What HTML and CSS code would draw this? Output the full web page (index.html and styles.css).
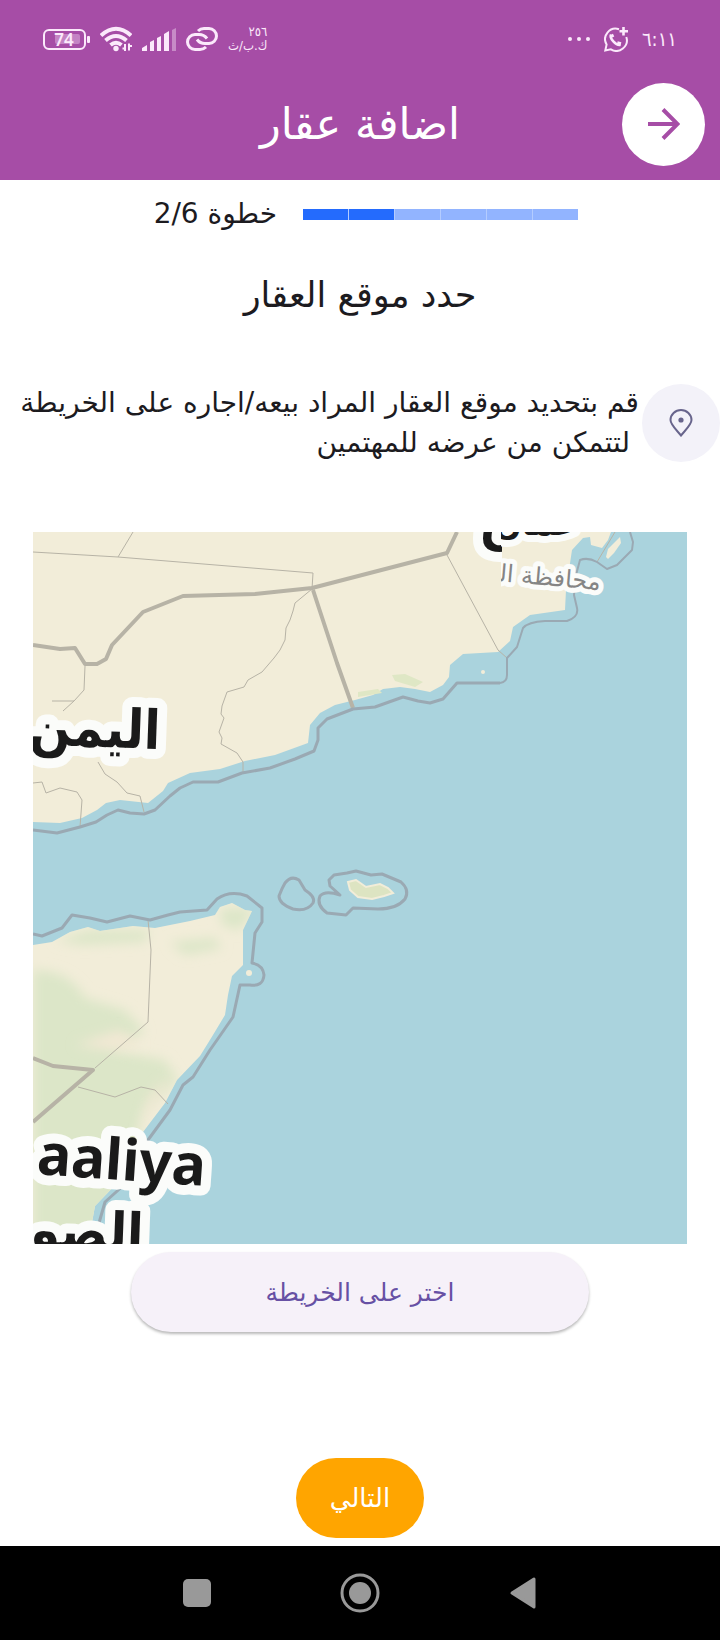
FILE: index.html
```html
<!DOCTYPE html>
<html lang="ar" dir="rtl">
<head>
<meta charset="utf-8">
<meta name="viewport" content="width=device-width, initial-scale=1">
<title>اضافة عقار</title>
<link rel="stylesheet" href="styles.css">
</head>
<body>
<header class="top">
  <div class="status">
    <div class="status-group">
      <span class="clock">٦:١١</span>
      <svg class="chat" viewBox="0 0 24 25" width="24" height="25" fill="none" stroke="currentColor" stroke-width="2">
        <path d="M15 2.2A10.5 10.5 0 0 0 2.6 17.5L1.3 23.5l5.6-1.2A10.5 10.5 0 0 0 22.3 10"/>
        <path d="M19.5 0v8.5M15.5 4.3H24" stroke-width="2.6"/>
        <path d="M7 7.5c-2 3.5 5 11.500 9.500 10.300" stroke-width="2.500"/>
        <path d="M7.500 7.500l1.300 2.700M13.300 15.800l3.700.9" stroke-width="3.200"/>
      </svg>
      <svg class="dots" viewBox="0 0 22 4" width="22" height="4" fill="currentColor"><circle cx="2" cy="2" r="2"/><circle cx="11" cy="2" r="2"/><circle cx="20" cy="2" r="2"/></svg>
    </div>
    <div class="status-group status-end">
      <span class="speed"><span>٢٥٦</span><span>ك.ب/ث</span></span>
      <svg viewBox="0 0 32 24" width="32" height="24" fill="none" stroke="currentColor" stroke-width="3">
        <path d="M12 4Q14.500 1.500 18 1.500h5a7.300 7.300 0 0 1 0 15h-4q-5 0-8-4"/>
        <path d="M20 20q-2.500 2.500-6 2.500H9a7.300 7.300 0 0 1 0-15h4q5 0 8 4"/>
      </svg>
      <svg viewBox="0 0 34 23" width="34" height="23" fill="currentColor">
        <path d="M0 20l5-3v6H0ZM8 14l4-2v11H8ZM15 10l4-2v15h-4ZM22 6l5-3v20h-5Z"/><path d="M30 2l4-2v23h-4Z" opacity=".4"/>
      </svg>
      <svg viewBox="0 0 32 26" width="32" height="26" fill="none" stroke="currentColor" stroke-width="4">
        <path d="M1 9.500Q16-4 31 9.500M5.500 14.500q10.500-9 21 0M10.500 19q5.500-4.500 11 0"/>
        <circle cx="16" cy="22.500" r="2.700" fill="currentColor" stroke="none"/>
        <path d="M25 18v7M29 17.500v7M22.500 22.500h2.500M29 20h3" stroke-width="2"/>
      </svg>
      <svg class="battery" viewBox="0 0 47 21" width="47" height="21">
        <rect x="1" y="1" width="41" height="19" rx="5" fill="none" stroke="currentColor" stroke-width="2"/>
        <rect x="12" y="5" width="25" height="10" rx="2" fill="currentColor" opacity=".35"/>
        <text x="21" y="17" text-anchor="middle" direction="ltr">74</text>
        <rect x="44" y="7" width="3" height="7" rx="1" fill="currentColor"/>
      </svg>
    </div>
  </div>
  <div class="appbar">
    <button class="back" type="button" aria-label="رجوع">
      <svg viewBox="0 0 32 32" width="32" height="32" fill="none" stroke="currentColor" stroke-width="4"><path d="M0 16h29M15 1.500L29.500 16 15 30.500"/></svg>
    </button>
    <h1 class="title">اضافة عقار</h1>
  </div>
</header>

<main class="content">
  <div class="step">
    <div class="bar" role="progressbar" aria-label="خطوة" aria-valuemin="0" aria-valuemax="6" aria-valuenow="2">
      <i></i><i></i><i></i><i></i><i class="done"></i><i class="done"></i>
    </div>
    <span class="step-label">خطوة 2/6</span>
  </div>
  <h2 class="heading">حدد موقع العقار</h2>
  <div class="hint">
    <span class="pin">
      <svg viewBox="0 0 24 28" width="24" height="28" fill="none" stroke="currentColor" stroke-width="2"><path d="M12 26.500C7 20.500 1.500 15.500 1.500 11a10.500 10 0 0 1 21 0c0 4.500-5.500 9.500-10.500 15.500Z"/><circle cx="12" cy="11" r="2.600" fill="currentColor" stroke="none"/></svg>
    </span>
    <p class="hint-text">قم بتحديد موقع العقار المراد بيعه/اجاره على الخريطة<br>&nbsp;لتتمكن من عرضه للمهتمين</p>
  </div>

  <svg class="map" viewBox="33 532 654 712" role="img" aria-label="الخريطة">
    <defs>
      <clipPath id="tile"><rect x="501" y="532" width="186" height="200"/></clipPath>
      <clipPath id="tile-left"><rect x="33" y="532" width="469" height="712"/></clipPath>
      <clipPath id="somalia"><path d="M33 945L52 942 70 932 88 927 100 931 133 926 155 928 190 921 215 915 220 907 232 903 245 910 252 911 243 930 243 965 232 976 228 995 225 1015 213 1035 200 1056 177 1080 165 1103 143 1132 120 1180 95 1206 88 1244H33Z"/></clipPath>
      <filter id="soft" x="-20%" y="-20%" width="140%" height="140%"><feGaussianBlur stdDeviation="6"/></filter>
    </defs>
    <rect class="sea" x="33" y="532" width="654" height="712"/>
    <path class="land" d="M33 532V822L60 823 82 818 97 810 106 803 120 800 148 803 163 791 168 783 190 773 220 769 245 761 275 755 308 743 310 725 320 713 335 705 355 700 373 695 383 689 400 687 415 689 430 692 443 685 449 677 450 665 463 654 498 652 510 641 513 627 530 615 565 610 566 590 572 550 583 538 590 537 591 545 602 548 608 540 611 532Z"/>
    <path class="land" d="M606 557L608 549 616 541 620 537 621 543 614 553 608 559Z"/>
    <g clip-path="url(#somalia)">
      <rect class="land" x="33" y="880" width="240" height="364"/>
      <g class="green" filter="url(#soft)">
        <path d="M33 970Q70 970 85 998L125 1010 145 1032 110 1050 165 1060 178 1080 145 1110 120 1190 90 1244H33Z"/>
        <path d="M55 940L90 930 150 930 145 942 80 945ZM220 908L255 908 240 930 222 925ZM170 942L215 938 222 948 185 955Z"/>
      </g>
      <path class="sand" filter="url(#soft)" d="M75 1045L120 1030 140 1045 110 1050ZM172 1075L140 1130 150 1095Z"/>
    </g>
    <path class="shrub" d="M392 675L405 674 423 682 415 687 395 681ZM358 692L378 689 382 693 358 697Z"/>
    <path class="islet" d="M348 882L356 880 366 887 380 884 388 888 393 893 384 896 372 899 358 897 350 890Z"/>
    <circle class="land" cx="249" cy="973" r="3"/>
    <circle class="islet" cx="483" cy="672" r="1"/>
    <g class="border thin">
      <path d="M33 552L118 557 313 573 312 589M118 557L133 532M312 589L295 603 293 611 290 620 286 628 285 640 280 650 274 658 262 672 248 680 244 687 227 692 222 706 221 714 224 718 219 732 222 738 221 744 237 753 243 762 243 772M85 666L84 690 74 701 52 701M74 701L63 711M98 762L105 774 117 782 127 793 140 796 144 812M33 783L42 782 46 793 60 788 77 792 82 800 80 827M447 555L498 650 507 658"/>
      <path d="M148 920L151 950 148 1022 95 1068M78 1087L115 1097 141 1087 155 1090 168 1104M597 562L615 532"/>
    </g>
    <g class="border thick">
      <path d="M33 645L60 649 75 648 85 664 97 664 106 659 112 645 143 612 183 596 255 594 312 588 447 553 457 532M313 590L337 663 353 708"/>
      <path d="M33 1058L53 1066 93 1070 33 1122"/>
    </g>
    <g class="waterline">
      <path class="bold" d="M33 830L57 833 80 827 96 822 107 815 118 810 130 813 144 814 155 810 170 796 180 788 193 782 218 782 242 773 270 768 295 759 314 751 318 740 318 728 327 719 353 709 375 707 403 697 418 701 430 703 443 699 457 683 500 683"/>
      <path d="M500 683Q507 682 507 675V658L517 647 523 628Q528 622 545 621L567 621Q579 617 577 608L574 595 576 575 580 560Q588 557 597 562L607 569 617 565 632 550 633 542 630 532"/>
      <path class="bold" d="M33 934L42 936 62 928 72 915 90 918 107 922 130 916 150 920 168 915 180 912 207 910 217 899Q230 890 247 896L262 908V922L255 933 252 963Q263 965 264 975 263 987 250 985H240L233 1017 217 1040 210 1050 193 1077 183 1085 170 1110 148 1140 135 1175 105 1202 93 1244"/>
      <path class="bold" d="M285 883Q291 875 299 880L305 890Q316 897 313 903 307 912 293 909 279 904 279 896 282 888 285 883Z"/>
      <path class="bold" d="M334 875L347 873 356 871 371 875 382 874 401 882Q410 890 405 899 397 909 378 909L353 908 346 915 327 913Q316 905 320 896 325 890 340 895L330 886 329 880Z"/>
    </g>
    <g class="labels">
      <text class="country" x="160" y="749" transform="rotate(2 160 749)">اليمن</text>
      <g clip-path="url(#tile-left)"><text class="country" x="480" y="543" direction="ltr">ن</text></g>
      <g clip-path="url(#tile)">
        <text class="gulf" x="577" y="535">عمان</text>
        <text class="region" x="600" y="590" transform="rotate(5 600 590)">محافظة الوسطى</text>
      </g>
      <text class="country latin" x="36" y="1174" transform="rotate(4 36 1174)" direction="ltr">aaliya</text>
      <text class="country" x="143" y="1252" transform="rotate(2 143 1252)">الصومال</text>
    </g>
  </svg>

  <button class="pick" type="button">اختر على الخريطة</button>
  <button class="next" type="button">التالي</button>
</main>

<nav class="system">
  <button type="button" aria-label="رجوع للخلف"><svg viewBox="0 0 28 34" width="28" height="34"><path d="M3 17L25 3v28Z" fill="currentColor" stroke="currentColor" stroke-width="3" stroke-linejoin="round"/></svg></button>
  <button type="button" aria-label="الرئيسية"><svg viewBox="0 0 40 40" width="40" height="40"><circle cx="20" cy="20" r="18" fill="none" stroke="currentColor" stroke-width="3"/><circle cx="20" cy="20" r="11" fill="currentColor"/></svg></button>
  <button type="button" aria-label="التطبيقات"><svg viewBox="0 0 28 28" width="28" height="28"><rect width="28" height="28" rx="5" fill="currentColor"/></svg></button>
</nav>
</body>
</html>
```

FILE: styles.css
```css
* { box-sizing: border-box; }

body {
  margin: 0;
  min-height: 100vh;
  display: flex;
  flex-direction: column;
  background: #fff;
  color: #1c1b1f;
  font-family: "DejaVu Sans", sans-serif;
}

button {
  border: 0;
  padding: 0;
  font-family: inherit;
  cursor: pointer;
}

svg { display: block; flex: none; }

.top { background: #a64da6; color: #fff; }

.status {
  height: 78px;
  padding: 0 43px;
  display: flex;
  justify-content: space-between;
  align-items: center;
  color: #fbe9fb;
  font-family: "DejaVu Sans Condensed", "DejaVu Sans", sans-serif;
}

.status-group { display: flex; align-items: center; gap: 14px; }
.status-end { gap: 10px; }
.clock { font-size: 20px; line-height: 24px; }
.speed {
  display: flex;
  flex-direction: column;
  font-size: 13px;
  line-height: 14px;
}
.battery text {
  font: 600 17px "Noto Sans", sans-serif;
  fill: currentColor;
}

.appbar {
  height: 102px;
  padding: 0 15px 10px;
  display: grid;
  grid-template-columns: 83px 1fr 83px;
  align-items: center;
}

.back {
  width: 83px;
  height: 83px;
  border-radius: 50%;
  background: #fff;
  color: #a64da6;
  display: grid;
  place-items: center;
}

.title {
  margin: 0;
  text-align: center;
  font-size: 43px;
  line-height: 56px;
  font-weight: 400;
}

.content {
  flex: 1;
  display: flex;
  flex-direction: column;
  align-items: center;
}

.step {
  display: flex;
  align-items: center;
  gap: 26px;
  margin-top: 14px;
  width: 100%;
  padding: 0 142px;
}
.bar {
  display: flex;
  flex: none;
  width: 275px;
  gap: 1px;
  background: #b4ccff;
}
.bar i { flex: 1; height: 11px; background: #92b4ff; }
.bar .done { background: #246bfd; }
.step-label { font-size: 28px; line-height: 40px; white-space: nowrap; }

.heading {
  margin: 37px 0 0;
  font-size: 35px;
  line-height: 48px;
  font-weight: 400;
}

.hint {
  width: 100%;
  margin-top: 64px;
  display: flex;
  align-items: center;
}
.pin {
  width: 78px;
  height: 78px;
  flex: none;
  border-radius: 50%;
  background: #f3f2f9;
  color: #68658c;
  display: grid;
  place-items: center;
}
.hint-text {
  flex: 1;
  margin: 0;
  padding: 0 3px;
  font-size: 28px;
  line-height: 40px;
}

.map {
  width: calc(100% - 66px);
  height: auto;
  margin-top: 69px;
}
.sea { fill: #aad3dd; }
.land { fill: #f2edd9; }
.green { fill: #dce6c8; }
.sand { fill: #f2e8d4; }
.shrub { fill: #dfe7c5; }
.islet { fill: #dde4c2; stroke: #f2edd9; stroke-width: 2; }
.border { fill: none; stroke: #b7b3a6; stroke-linejoin: round; }
.thin { stroke-width: 1; }
.thick { stroke-width: 4; }
.waterline { fill: none; stroke: #9aa9b3; stroke-width: 2; stroke-linejoin: round; }
.waterline .bold { stroke-width: 3; }
.labels text {
  paint-order: stroke;
  stroke: #fbfcfa;
  stroke-linejoin: round;
}
.labels .country {
  font: 700 54px "DejaVu Sans Condensed", "DejaVu Sans", sans-serif;
  fill: #1a1a1a;
  stroke-width: 20px;
}
.labels .latin { font: 700 57px "Noto Sans", sans-serif; }
.labels .gulf {
  font: 700 32px "DejaVu Sans", sans-serif;
  fill: #1a1a1a;
  stroke-width: 14px;
}
.labels .region {
  font: 400 24px "DejaVu Sans", sans-serif;
  fill: #858585;
  stroke-width: 10px;
}

.pick {
  width: calc(100% - 262px);
  height: 80px;
  margin-top: 8px;
  border-radius: 40px;
  background: #f6f1f9;
  color: #6750a4;
  font-size: 25px;
  box-shadow: 0 2px 3px rgba(0, 0, 0, .28);
}

.next {
  height: 80px;
  margin: auto 0 8px;
  padding: 0 34px;
  border-radius: 40px;
  background: #ffa500;
  color: #fff;
  font-size: 26px;
}

.system {
  height: 94px;
  padding: 0 116px;
  background: #000;
  display: grid;
  grid-template-columns: repeat(3, 1fr);
}
.system button {
  background: none;
  color: #999;
  display: grid;
  place-items: center;
}
```
